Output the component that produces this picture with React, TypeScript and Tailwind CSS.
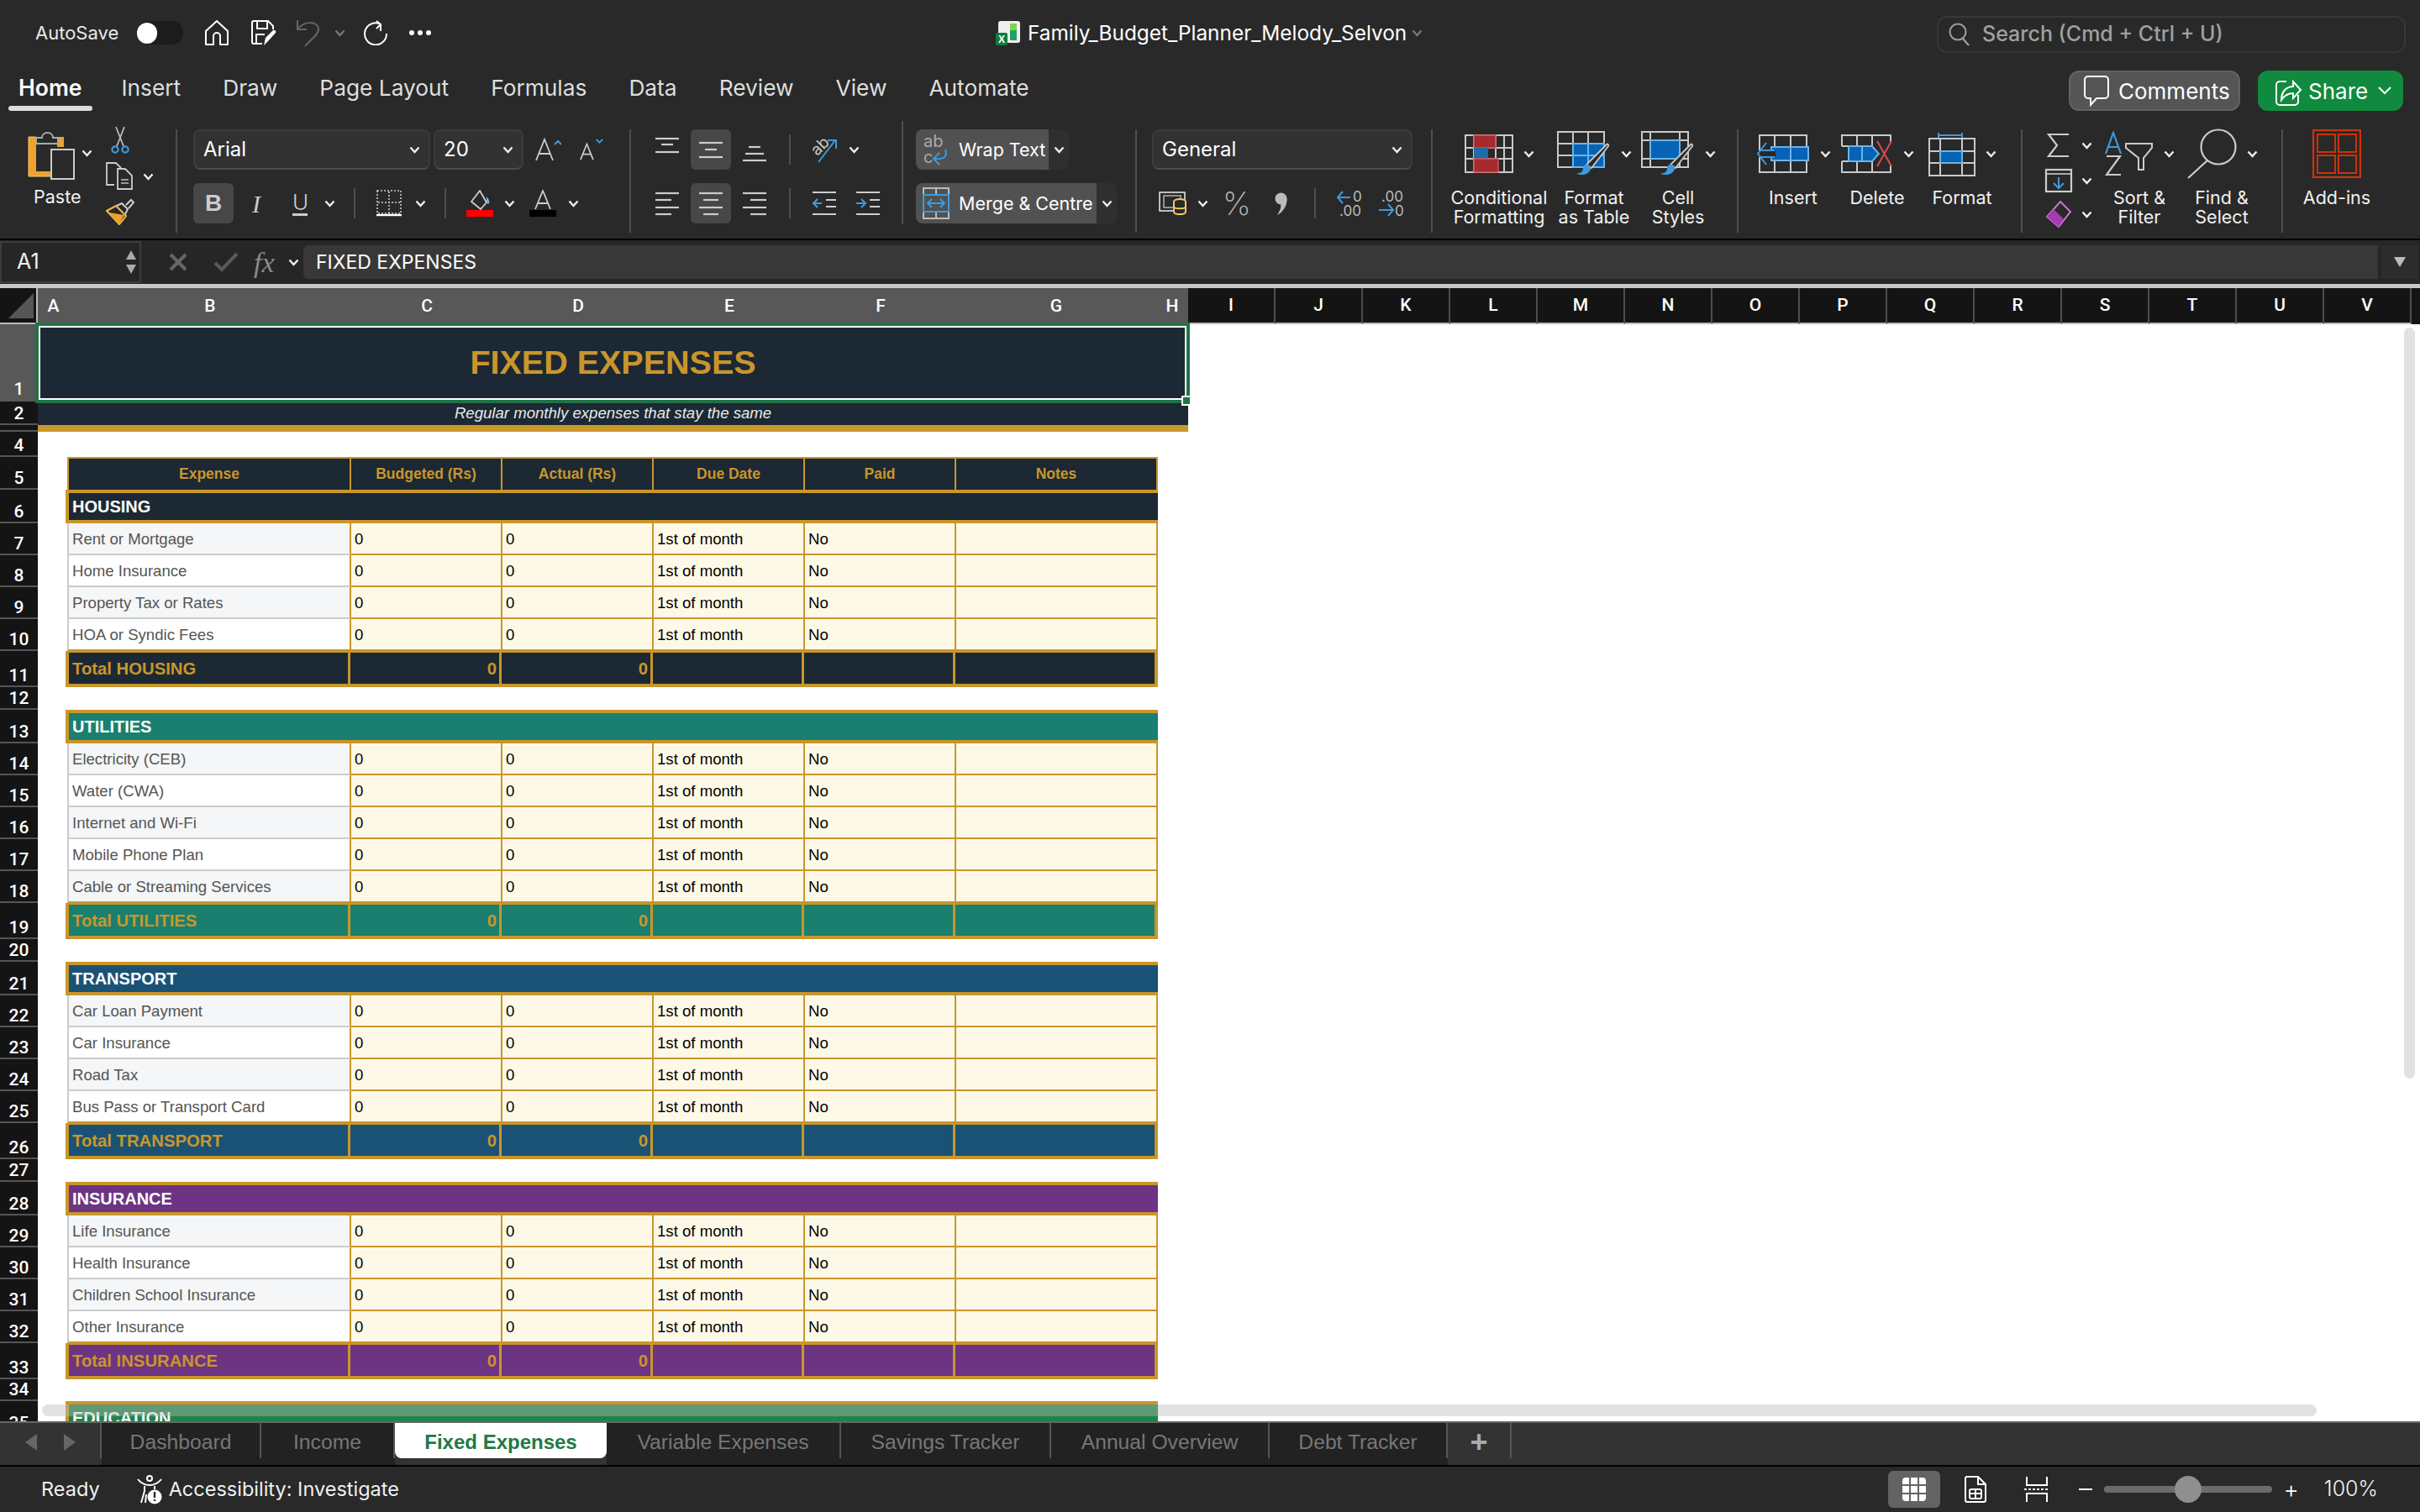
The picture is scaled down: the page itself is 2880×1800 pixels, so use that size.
import type { ReactNode } from "react";

const navy = "bg-[#1c2833]";

function Chev({ dim = false }: { dim?: boolean }) {
  return (
    <svg width="13" height="9" viewBox="0 0 13 9" className="shrink-0" fill="none">
      <path d="M1.5 1.5l5 5.5 5-5.5" stroke={dim ? "#777" : "#eee"} strokeWidth="2.4" />
    </svg>
  );
}

function Divider({ className = "h-[123px]" }: { className?: string }) {
  return <div className={`w-[2px] shrink-0 bg-[#4f4f4f] ${className}`}></div>;
}

// ----- title bar icons
function HomeIcon() {
  return (
    <svg width="30" height="32" viewBox="0 0 30 32" fill="none" stroke="#fff" strokeWidth="2">
      <path d="M2 14L15 2l13 12v16h-9V20a4 4 0 0 0-8 0v10H2z" strokeLinejoin="round" />
    </svg>
  );
}
function SaveIcon() {
  return (
    <svg width="32" height="32" viewBox="0 0 32 32" fill="none" stroke="#fff" strokeWidth="2">
      <path d="M14 29H4a2 2 0 0 1-2-2V4a2 2 0 0 1 2-2h17l6 6v4" />
      <path d="M8 2v9h12V2M7 29V18h10" />
      <path d="M16 31l2-9 9-9c2-1 4 1 3 3l-9 10z" fill="#fff" stroke="none" />
    </svg>
  );
}
function UndoIcon() {
  return (
    <svg width="28" height="34" viewBox="0 0 28 34" fill="none" stroke="#666" strokeWidth="2">
      <path d="M1 2v11h11M1 13C8 3 26 2 26 13c0 6-8 11-16 20" />
    </svg>
  );
}
function RedoIcon() {
  return (
    <svg width="30" height="30" viewBox="0 0 30 30" fill="none" stroke="#fff" strokeWidth="2">
      <path d="M19 4a13 13 0 1 0 9 12" />
      <path d="M16 1l5 4-5 5M21 5v8" />
    </svg>
  );
}
function ExcelIcon() {
  return (
    <svg width="30" height="30" viewBox="0 0 30 30" className="overflow-visible">
      <rect x="3" y="1" width="26" height="26" rx="3" fill="#eee" />
      <path d="M17 4h8v20h-8z" fill="#21a366" />
      <path d="M17 4h8v8h-8z" fill="#7dd34f" />
      <rect x="0" y="15" width="14" height="15" rx="2" fill="#107c41" />
      <text x="3" y="27" fontSize="12" fontWeight="700" fill="#fff" fontFamily="Liberation Sans">X</text>
    </svg>
  );
}

// ----- clipboard group
function PasteIcon() {
  return (
    <svg width="60" height="62" viewBox="0 0 60 62" fill="none">
      <path d="M2 9h9v41h17v6H2z" fill="#eca22c" />
      <path d="M36 9h8v12h-8z" fill="#eca22c" />
      <path d="M2 9h9M2 9v47h26" stroke="#f8c96e" strokeWidth="1" />
      <path d="M11 17v-7h7c0-8 13-8 13 0h6v7z" stroke="#aaa" strokeWidth="2" fill="#292929" />
      <rect x="29" y="24" width="27" height="35" stroke="#ccc" strokeWidth="2" fill="#292929" />
    </svg>
  );
}
function ScissorsIcon() {
  return (
    <svg width="22" height="34" viewBox="0 0 22 34" fill="none">
      <path d="M6 1l9 23M16 1L7 24" stroke="#bbb" strokeWidth="1.8" />
      <circle cx="5" cy="28" r="3.6" stroke="#3b9ae1" strokeWidth="2.2" />
      <circle cx="17" cy="28" r="3.6" stroke="#3b9ae1" strokeWidth="2.2" />
    </svg>
  );
}
function CopyIcon() {
  return (
    <svg width="32" height="34" viewBox="0 0 32 34" fill="none" stroke="#ccc" strokeWidth="1.8">
      <path d="M10 27H1V1h11l6 6" />
      <path d="M14 8h9l8 8v16H14z" fill="#292929" />
      <path d="M18 21h9M18 25h9" stroke="#999" />
    </svg>
  );
}
function PainterIcon() {
  return (
    <svg width="34" height="32" viewBox="0 0 34 32" fill="none">
      <path d="M1 15l11-6 12 12-8 10z" fill="#292929" stroke="#f1b849" strokeWidth="2" />
      <path d="M4 17l18 3-6 10z" fill="#eca22c" />
      <path d="M13 9l6-3 7 7-3 6M24 8l6-6 3 3-6 7" stroke="#ccc" strokeWidth="2" />
    </svg>
  );
}

// ----- font group
function Select({ label, className }: { label: string; className: string }) {
  return (
    <div className={`h-[48px] flex items-center justify-between pl-[10px] pr-[10px] rounded-[8px] bg-[#323232] border-2 border-[#3b3b3b] border-b-[#4c4c4c] text-[24px] text-white ${className}`}>
      <span>{label}</span>
      <Chev />
    </div>
  );
}
function GrowA({ up }: { up: boolean }) {
  return (
    <svg width={up ? 32 : 30} height="30" viewBox="0 0 32 30" fill="none">
      {up ? (
        <>
          <path d="M2 28L12 3l10 25M5.5 20h13" stroke="#ccc" strokeWidth="1.8" />
          <path d="M24 9l4-4 4 4" stroke="#3b9ae1" strokeWidth="2" />
        </>
      ) : (
        <>
          <path d="M2 28l8-20 8 20M5 21h10" stroke="#ccc" strokeWidth="1.8" />
          <path d="M22 2l4 4 4-4" stroke="#3b9ae1" strokeWidth="2" />
        </>
      )}
    </svg>
  );
}
function BordersIcon() {
  return (
    <svg width="30" height="32" viewBox="0 0 30 32" fill="none">
      <rect x="1" y="1" width="28" height="27" stroke="#ccc" strokeWidth="1.6" strokeDasharray="2 2" />
      <path d="M15 2v26M2 15h26" stroke="#ccc" strokeWidth="1.6" strokeDasharray="2 2" />
      <path d="M0 30h30" stroke="#fff" strokeWidth="2.4" />
    </svg>
  );
}
function FillIcon() {
  return (
    <svg width="32" height="32" viewBox="0 0 32 32" fill="none">
      <path d="M16 1l8 14-7 8-11-9z" stroke="#ccc" strokeWidth="1.8" />
      <path d="M24 8c3 3 4 6 3 8s-3 0-3-2z" fill="#6fb5ea" />
      <rect x="0" y="24" width="32" height="8" fill="#fe0000" />
    </svg>
  );
}
function FontColorIcon() {
  return (
    <svg width="32" height="32" viewBox="0 0 32 32" fill="none">
      <path d="M7 23L16 1l9 22M10 16h12" stroke="#ccc" strokeWidth="1.8" />
      <rect x="0" y="24" width="32" height="8" fill="#000" />
    </svg>
  );
}

// ----- alignment icons, three or four strokes
function Lines({ rows }: { rows: [number, number, number][] }) {
  return (
    <svg width="30" height="32" viewBox="0 0 30 32" fill="none" stroke="#ccc" strokeWidth="2.2">
      {rows.map(([y, x1, x2]) => (
        <path key={y + "-" + x1} d={`M${x1} ${y}H${x2}`} />
      ))}
    </svg>
  );
}
function AlignBtn({ rows, on = false }: { rows: [number, number, number][]; on?: boolean }) {
  return (
    <div className={`w-[48px] h-[48px] flex items-center justify-center rounded-[6px] ${on ? "bg-[#474747]" : ""}`}>
      <Lines rows={rows} />
    </div>
  );
}
function OrientIcon() {
  return (
    <svg width="36" height="34" viewBox="0 0 36 34" fill="none" className="overflow-visible">
      <text x="3" y="20" fontSize="19" fill="#ccc" fontFamily="Inter" transform="rotate(-45 12 16)">ab</text>
      <path d="M10 32L30 6M21 6h10v10" stroke="#3b9ae1" strokeWidth="2" />
    </svg>
  );
}
function IndentIcon({ out }: { out: boolean }) {
  return (
    <svg width="30" height="32" viewBox="0 0 30 32" fill="none">
      <path d="M1 3h28M1 29h28" stroke="#ccc" strokeWidth="2.2" />
      <path d="M17 12h12M17 20h12" stroke="#ccc" strokeWidth="2.2" />
      {out ? <path d="M12 16H2M7 11l-5 5 5 5" stroke="#3b9ae1" strokeWidth="2.2" /> : <path d="M1 16h11M7 11l5 5-5 5" stroke="#3b9ae1" strokeWidth="2.2" />}
    </svg>
  );
}

// ----- wrap and merge
function WrapIcon() {
  return (
    <svg width="32" height="38" viewBox="0 0 32 38" fill="none" className="overflow-visible">
      <text x="1" y="16" fontSize="20" fill="#aaa" fontFamily="Inter">ab</text>
      <text x="1" y="35" fontSize="20" fill="#aaa" fontFamily="Inter">c</text>
      <path d="M27 19c3 9-2 12-14 11M20 23l-7 7 7 7" stroke="#3b9ae1" strokeWidth="2" />
    </svg>
  );
}
function MergeIcon() {
  return (
    <svg width="32" height="38" viewBox="0 0 32 38" fill="none">
      <path d="M1 8V1h30v7M1 30v7h30v-7M16 1v7M16 30v7" stroke="#bbb" strokeWidth="2" />
      <rect x="1" y="9" width="30" height="20" stroke="#3b9ae1" strokeWidth="2" />
      <path d="M6 19h20M11 14l-5 5 5 5M21 14l5 5-5 5" stroke="#3b9ae1" strokeWidth="2" />
    </svg>
  );
}
function SplitBtn({ icon, label, main, chev }: { icon: ReactNode; label: string; main: string; chev: string }) {
  return (
    <div className="flex h-[48px]">
      <div className={`flex items-center pl-[8px] rounded-l-[8px] bg-[#515151] text-white text-[21.5px] ${main}`}>
        {icon}
        <span className="ml-[11px] whitespace-nowrap">{label}</span>
      </div>
      <div className={`flex items-center justify-center rounded-r-[8px] bg-[#2f2f2f] ${chev}`}>
        <Chev />
      </div>
    </div>
  );
}

// ----- number group
function AccountingIcon() {
  return (
    <svg width="34" height="28" viewBox="0 0 34 28" fill="none">
      <rect x="1" y="1" width="30" height="22" stroke="#ccc" strokeWidth="1.8" />
      <rect x="6" y="5" width="20" height="14" stroke="#bbb" strokeWidth="1.4" />
      <ellipse cx="25" cy="12" rx="7" ry="3" fill="#292929" stroke="#f1c96a" strokeWidth="2" />
      <path d="M18 12v12c0 4 14 4 14 0V12" fill="#292929" stroke="#f1c96a" strokeWidth="2" />
      <path d="M18 18c0 3 14 3 14 0" stroke="#f1c96a" strokeWidth="2" />
    </svg>
  );
}
function CommaIcon() {
  return (
    <svg width="15" height="27" viewBox="0 0 15 27" fill="#bbb">
      <circle cx="7.5" cy="7.5" r="7" />
      <path d="M14.5 7.5C15 17 9 24 3 27c3-5 5-9 4-12z" />
    </svg>
  );
}
function DecimalIcon({ more }: { more: boolean }) {
  return (
    <svg width="34" height="32" viewBox="0 0 34 32" fill="none" className="overflow-visible">
      {more ? (
        <>
          <path d="M17 9H2M8 2L2 9l6 7" stroke="#3b9ae1" strokeWidth="2" />
          <text x="20" y="14" fontSize="17" fill="#bbb" fontFamily="Inter">0</text>
          <text x="4" y="31" fontSize="17" fill="#bbb" fontFamily="Inter">.00</text>
        </>
      ) : (
        <>
          <text x="4" y="14" fontSize="17" fill="#bbb" fontFamily="Inter">.00</text>
          <path d="M1 24h17M12 17l6 7-6 7" stroke="#3b9ae1" strokeWidth="2" />
          <text x="20" y="31" fontSize="17" fill="#bbb" fontFamily="Inter">0</text>
        </>
      )}
    </svg>
  );
}

// ----- cell and style icons
const gridLines = "#c9c9c9";
function CondIcon() {
  return (
    <svg width="58" height="46" viewBox="0 0 58 46" fill="none">
      <rect x="1" y="1" width="56" height="44" stroke={gridLines} strokeWidth="2" />
      <path d="M11 1v44M37 1v44M47 1v44M1 16h56M1 29h56" stroke={gridLines} strokeWidth="2" />
      <rect x="11" y="1" width="26" height="15" fill="#a52b2f" stroke="#d15a5a" strokeWidth="1.5" />
      <rect x="11" y="16" width="17" height="13" fill="#1f6ba8" />
      <rect x="11" y="29" width="29" height="16" fill="#a52b2f" stroke="#d15a5a" strokeWidth="1.5" />
    </svg>
  );
}
function Brush() {
  return (
    <>
      <path d="M59 16c1-1 3 0 2 2L41 44l-6-4z" fill="#292929" stroke="#c9c9c9" strokeWidth="1.8" />
      <path d="M34 40c3-1 5 1 6 4 0 5-6 9-12 8-2 0-4-1-5-2 5 1 8-2 8-6 0-2 1-3 3-4z" fill="#3b9ae1" />
    </>
  );
}
function TableIcon() {
  return (
    <svg width="64" height="54" viewBox="0 0 64 54" fill="none">
      <rect x="1" y="1" width="55" height="42" stroke={gridLines} strokeWidth="2" />
      <path d="M19 1v42M37 1v42M1 15h55M1 29h55" stroke={gridLines} strokeWidth="2" />
      <rect x="19" y="15" width="37" height="28" fill="#0763b5" stroke="#6bb3ec" strokeWidth="2" />
      <path d="M37 15v28M19 29h37" stroke="#6bb3ec" strokeWidth="2" />
      <Brush />
    </svg>
  );
}
function StylesIcon() {
  return (
    <svg width="64" height="54" viewBox="0 0 64 54" fill="none">
      <rect x="1" y="1" width="55" height="42" stroke={gridLines} strokeWidth="2" />
      <path d="M11 1v42M46 1v42M1 11h55M1 33h55" stroke={gridLines} strokeWidth="2" />
      <rect x="11" y="11" width="35" height="22" fill="#0763b5" stroke="#6bb3ec" strokeWidth="2" />
      <Brush />
    </svg>
  );
}
function InsertIcon() {
  return (
    <svg width="64" height="46" viewBox="0 0 64 46" fill="none">
      <rect x="4" y="1" width="56" height="44" stroke={gridLines} strokeWidth="2" />
      <path d="M22 1v44M41 1v44" stroke={gridLines} strokeWidth="2" />
      <rect x="18" y="15" width="44" height="16" fill="#0763b5" stroke="#6bb3ec" strokeWidth="2" />
      <path d="M41 15v16" stroke="#6bb3ec" strokeWidth="2" />
      <rect x="3" y="19" width="20" height="8" fill="#292929" />
      <path d="M22 19H5M22 27H5M12 10L2 23l10 13" stroke="#3b9ae1" strokeWidth="2" />
    </svg>
  );
}
function DeleteIcon() {
  return (
    <svg width="62" height="46" viewBox="0 0 62 46" fill="none">
      <path d="M41 1H1v13M1 32v13h40M59 10V1H41M59 36v9H41M19 1v13M19 32v13M37 1v13M37 32v13" stroke={gridLines} strokeWidth="2" />
      <path d="M1 14h14M1 32h14" stroke={gridLines} strokeWidth="2" />
      <path d="M9 14h28l8 9-8 9H9z" fill="#0763b5" stroke="#6bb3ec" strokeWidth="2" />
      <path d="M25 14v18" stroke="#6bb3ec" strokeWidth="2" />
      <path d="M43 8l17 30M60 8L43 38" stroke="#e0484c" strokeWidth="2" />
    </svg>
  );
}
function FormatIcon() {
  return (
    <svg width="56" height="54" viewBox="0 0 56 54" fill="none">
      <path d="M12 2v6M40 2v6M12 5h28" stroke="#3b9ae1" strokeWidth="2" />
      <rect x="1" y="9" width="54" height="44" stroke={gridLines} strokeWidth="2" />
      <path d="M14 9v44M40 9v44M1 24h54M1 38h54" stroke={gridLines} strokeWidth="2" />
      <rect x="14" y="24" width="26" height="14" fill="#0763b5" stroke="#6bb3ec" strokeWidth="2" />
    </svg>
  );
}
function SortIcon() {
  return (
    <svg width="58" height="54" viewBox="0 0 58 54" fill="none">
      <path d="M1 27L10 2l9 25M4 19h12" stroke="#3b9ae1" strokeWidth="2.2" />
      <path d="M2 30h16L2 52h17" stroke="#ccc" strokeWidth="2.2" />
      <path d="M25 15h31v5L46 32v14h-6V32L25 20z" stroke="#ccc" strokeWidth="2" />
    </svg>
  );
}
function FindIcon() {
  return (
    <svg width="60" height="60" viewBox="0 0 60 60" fill="none" stroke="#ccc" strokeWidth="2.2">
      <circle cx="38" cy="22" r="20.5" />
      <path d="M25 38L2 59" />
    </svg>
  );
}
function AddinsIcon() {
  return (
    <svg width="58" height="58" viewBox="0 0 58 58" fill="none" stroke="#c9340c" strokeWidth="2">
      <rect x="1" y="1" width="56" height="56" strokeWidth="2.4" />
      <rect x="6" y="6" width="21" height="21" />
      <rect x="31" y="6" width="21" height="21" />
      <rect x="6" y="31" width="21" height="21" />
      <rect x="31" y="31" width="21" height="21" />
    </svg>
  );
}
function BigBtn({ icon, label, width, chev = true }: { icon: ReactNode; label: ReactNode; width: string; chev?: boolean }) {
  return (
    <div className={`flex flex-col items-center shrink-0 ${width}`}>
      <div className="h-[58px] mb-[12px] flex items-center gap-[12px]">
        {icon}
        {chev && <Chev />}
      </div>
      <div className="text-[21.5px] leading-[23px] text-center text-[#f0f0f0]">{label}</div>
    </div>
  );
}

function TitleBar() {
  return (
    <div className="h-[78px] flex items-center shrink-0">
      <span className="ml-[42px] w-[99px] text-[22px] text-[#e8e8e8]">AutoSave</span>
      <div className="ml-[22px] w-[55px] h-[28px] rounded-full bg-[#1c1c1c] flex items-center">
        <div className="w-[24px] h-[25px] rounded-full bg-white"></div>
      </div>
      <div className="ml-[25px]"><HomeIcon /></div>
      <div className="ml-[25px]"><SaveIcon /></div>
      <div className="ml-[23px]"><UndoIcon /></div>
      <div className="ml-[17px]"><Chev dim /></div>
      <div className="ml-[21px]"><RedoIcon /></div>
      <div className="ml-[25px] flex gap-[4px]">
        <div className="w-[6px] h-[6px] rounded-full bg-white"></div>
        <div className="w-[6px] h-[6px] rounded-full bg-white"></div>
        <div className="w-[6px] h-[6px] rounded-full bg-white"></div>
      </div>
      <div className="ml-[672px]"><ExcelIcon /></div>
      <span className="ml-[8px] text-[24.4px] text-white">Family_Budget_Planner_Melody_Selvon</span>
      <div className="ml-[6px]"><Chev dim /></div>
      <div className="ml-auto mr-[17px] mt-[3px] w-[558px] h-[44px] rounded-[12px] border-2 border-[#373737] flex items-center pl-[12px]">
        <svg width="26" height="30" viewBox="0 0 26 30" fill="none" stroke="#a0a0a0" strokeWidth="2">
          <circle cx="11" cy="12" r="9.5" />
          <path d="M17 20l7 8" />
        </svg>
        <span className="ml-[14px] text-[25px] font-medium text-[#a0a0a0]">Search (Cmd + Ctrl + U)</span>
      </div>
    </div>
  );
}

function TabBar() {
  const tabs = ["Insert", "Draw", "Page Layout", "Formulas", "Data", "Review", "View", "Automate"];
  return (
    <div className="h-[54px] flex items-start shrink-0 pl-[22px]">
      <div className="relative h-[54px] flex items-center text-[26.5px] font-semibold text-white">
        Home
        <div className="absolute left-[-12px] right-[-13px] bottom-0 h-[6px] rounded-full bg-[#dcdcdc]"></div>
      </div>
      <div className="ml-[47px] h-[54px] flex items-center gap-[50px] text-[26.3px] text-[#dedede]">
        {tabs.map((t) => (
          <span key={t}>{t}</span>
        ))}
      </div>
      <div className="ml-auto mt-[6px] h-[48px] w-[204px] rounded-[12px] bg-[#555] border-2 border-[#636363] flex items-center pl-[15px] gap-[10px] text-[26px] text-white">
        <svg width="32" height="38" viewBox="0 0 32 38" fill="none" stroke="#fff" strokeWidth="2">
          <path d="M6 2h20a4 4 0 0 1 4 4v18a4 4 0 0 1-4 4H16l-7 8v-8H6a4 4 0 0 1-4-4V6a4 4 0 0 1 4-4z" />
        </svg>
        Comments
      </div>
      <div className="ml-[21px] mr-[20px] mt-[6px] h-[48px] w-[173px] rounded-[12px] bg-[#108a3e] flex items-center pl-[20px] gap-[8px] text-[26px] text-white">
        <svg width="32" height="38" viewBox="0 0 32 38" fill="none" stroke="#fff" strokeWidth="2">
          <path d="M14 8H6a4 4 0 0 0-4 4v20a4 4 0 0 0 4 4h18a4 4 0 0 0 4-4v-8" />
          <path d="M8 30c0-10 6-16 14-16V8l9 10-9 10v-6c-6 0-10 2-14 8z" />
        </svg>
        Share
        <svg width="16" height="10" viewBox="0 0 16 10" fill="none" className="ml-[4px]">
          <path d="M1 1l7 7 7-7" stroke="#fff" strokeWidth="2" />
        </svg>
      </div>
    </div>
  );
}

function Ribbon() {
  return (
    <div className="h-[154px] pt-[22px] flex items-start shrink-0 border-b-2 border-black text-white">
      {/* clipboard */}
      <div className="w-[209px] shrink-0 flex">
        <div className="ml-[32px] w-[60px] flex flex-col items-start">
          <PasteIcon />
          <span className="mt-[7px] ml-[8px] text-[21.5px] leading-[23px] text-[#f0f0f0]">Paste</span>
        </div>
        <div className="ml-[5px] mt-[24px]"><Chev /></div>
        <div className="ml-[16px] -mt-[4px] flex flex-col gap-[9px]">
          <div className="ml-[6px]"><ScissorsIcon /></div>
          <div className="flex items-center gap-[12px]"><CopyIcon /><Chev /></div>
          <div><PainterIcon /></div>
        </div>
      </div>
      <Divider />

      {/* font */}
      <div className="w-[538px] shrink-0 pl-[19px] flex flex-col gap-[16px]">
        <div className="flex items-center">
          <Select label="Arial" className="w-[282px]" />
          <Select label="20" className="ml-[4px] w-[107px]" />
          <div className="ml-[13px]"><GrowA up /></div>
          <div className="ml-[21px]"><GrowA up={false} /></div>
        </div>
        <div className="flex items-center">
          <div className="w-[48px] h-[48px] rounded-[6px] bg-[#474747] flex items-center justify-center font-['Liberation_Sans',sans-serif] font-bold text-[28px] text-[#ccc]">B</div>
          <span className="ml-[22px] w-[16px] font-['Liberation_Serif',serif] italic text-[30px] text-[#ccc]">I</span>
          <div className="ml-[32px] w-[18px] border-b-[3px] border-[#ccc] leading-[26px] text-[#ccc] text-[26px] font-light">U</div>
          <div className="ml-[20px]"><Chev /></div>
          <div className="ml-[22px]"><Divider className="h-[36px]" /></div>
          <div className="ml-[25px]"><BordersIcon /></div>
          <div className="ml-[16px]"><Chev /></div>
          <div className="ml-[22px]"><Divider className="h-[36px]" /></div>
          <div className="ml-[24px]"><FillIcon /></div>
          <div className="ml-[13px]"><Chev /></div>
          <div className="ml-[17px]"><FontColorIcon /></div>
          <div className="ml-[14px]"><Chev /></div>
        </div>
      </div>
      <Divider />

      {/* alignment */}
      <div className="w-[322px] shrink-0 flex flex-col gap-[16px] pl-[19px]">
        <div className="flex items-center">
          <AlignBtn rows={[[3, 1, 29], [10, 8, 22], [19, 1, 29]]} />
          <div className="ml-[4px]"><AlignBtn on rows={[[8, 1, 29], [16, 8, 22], [25, 1, 29]]} /></div>
          <div className="ml-[4px]"><AlignBtn rows={[[13, 8, 22], [21, 4, 26], [29, 1, 29]]} /></div>
          <div className="ml-[17px]"><Divider className="h-[36px]" /></div>
          <div className="ml-[23px]"><OrientIcon /></div>
          <div className="ml-[10px]"><Chev /></div>
        </div>
        <div className="flex items-center">
          <AlignBtn rows={[[4, 1, 29], [12, 1, 20], [21, 1, 29], [29, 1, 20]]} />
          <div className="ml-[4px]"><AlignBtn on rows={[[4, 1, 29], [12, 6, 24], [21, 1, 29], [29, 6, 24]]} /></div>
          <div className="ml-[4px]"><AlignBtn rows={[[4, 1, 29], [12, 10, 29], [21, 1, 29], [29, 10, 29]]} /></div>
          <div className="ml-[17px]"><Divider className="h-[36px]" /></div>
          <div className="ml-[25px]"><IndentIcon out /></div>
          <div className="ml-[22px]"><IndentIcon out={false} /></div>
        </div>
      </div>
      <div className="-mt-[10px]"><Divider /></div>

      {/* wrap and merge */}
      <div className="w-[276px] shrink-0 pl-[15px] flex flex-col gap-[16px]">
        <SplitBtn icon={<WrapIcon />} label="Wrap Text" main="w-[158px]" chev="w-[24px]" />
        <SplitBtn icon={<MergeIcon />} label="Merge & Centre" main="w-[215px]" chev="w-[24px]" />
      </div>
      <Divider />

      {/* number */}
      <div className="w-[350px] shrink-0 pl-[18px] flex flex-col gap-[16px]">
        <Select label="General" className="w-[310px]" />
        <div className="flex items-center h-[48px]">
          <div className="ml-[8px]"><AccountingIcon /></div>
          <div className="ml-[12px]"><Chev /></div>
          <span className="ml-[17px] w-[34px] text-[38px] leading-none font-extralight text-[#bbb]">%</span>
          <div className="ml-[28px]"><CommaIcon /></div>
          <div className="ml-[32px]"><Divider className="h-[36px]" /></div>
          <div className="ml-[24px]"><DecimalIcon more /></div>
          <div className="ml-[16px]"><DecimalIcon more={false} /></div>
        </div>
      </div>
      <Divider />

      {/* styles */}
      <div className="w-[362px] shrink-0 pl-[23px] flex">
        <BigBtn width="w-[112px]" icon={<CondIcon />} label={<>Conditional<br />Formatting</>} />
        <BigBtn width="w-[114px]" icon={<TableIcon />} label={<>Format<br />as Table</>} />
        <BigBtn width="w-[86px]" icon={<StylesIcon />} label={<>Cell<br />Styles</>} />
      </div>
      <Divider />

      {/* cells */}
      <div className="w-[336px] shrink-0 pl-[15px] flex">
        <BigBtn width="w-[100px]" icon={<InsertIcon />} label="Insert" />
        <BigBtn width="w-[100px]" icon={<DeleteIcon />} label="Delete" />
        <BigBtn width="w-[102px]" icon={<FormatIcon />} label="Format" />
      </div>
      <Divider />

      {/* editing */}
      <div className="w-[308px] shrink-0 pl-[25px] flex">
        <div className="w-[60px] shrink-0 flex flex-col -mt-[2px]">
          <div className="h-[42px] flex items-center gap-[9px]">
            <svg width="36" height="30" viewBox="0 0 36 30" fill="none">
              <path d="M30 2H6l10 13L6 28h24" stroke="#ccc" strokeWidth="2.2" />
            </svg>
            <Chev />
          </div>
          <div className="h-[42px] flex items-center gap-[9px]">
            <svg width="36" height="30" viewBox="0 0 36 30" fill="none">
              <rect x="3" y="2" width="30" height="26" stroke="#ccc" strokeWidth="2.2" />
              <path d="M3 7h30" stroke="#ccc" strokeWidth="1.6" />
              <path d="M18 11v13M12 18l6 6 6-6" stroke="#3b9ae1" strokeWidth="2" />
            </svg>
            <Chev />
          </div>
          <div className="h-[38px] flex items-center gap-[9px]">
            <svg width="36" height="32" viewBox="0 0 36 32" fill="none">
              <path d="M20 1l12 12-14 18L4 19z" stroke="#c879d1" strokeWidth="2" />
              <path d="M4 19l8-9 12 12-6 9z" fill="#a53bb0" />
            </svg>
            <Chev />
          </div>
        </div>
        <BigBtn width="w-[108px]" icon={<SortIcon />} label={<>Sort &<br />Filter</>} />
        <BigBtn width="w-[88px]" icon={<FindIcon />} label={<>Find &<br />Select</>} />
      </div>
      <Divider />

      {/* add-ins */}
      <BigBtn width="w-[128px]" icon={<AddinsIcon />} chev={false} label="Add-ins" />
    </div>
  );
}

function FormulaBar() {
  return (
    <div className="h-[52px] flex items-center shrink-0 bg-[#262626]">
      <div className="w-[168px] h-[50px] shrink-0 border-2 border-[#3c3c3c] flex items-center justify-between pl-[18px] pr-[4px] text-[25px] text-[#f0f0f0]">
        A1
        <div className="flex flex-col gap-[6px]">
          <div className="w-0 h-0 border-x-[6px] border-x-transparent border-b-[11px] border-b-[#aaa]"></div>
          <div className="w-0 h-0 border-x-[6px] border-x-transparent border-t-[11px] border-t-[#aaa]"></div>
        </div>
      </div>
      <svg width="22" height="22" viewBox="0 0 22 22" className="ml-[33px]" fill="none">
        <path d="M2 2l18 18M20 2L2 20" stroke="#666" strokeWidth="4" />
      </svg>
      <svg width="30" height="24" viewBox="0 0 30 24" className="ml-[31px]" fill="none">
        <path d="M2 13l8 8L28 2" stroke="#5a5a5a" strokeWidth="4" />
      </svg>
      <span className="ml-[18px] w-[39px] font-['Liberation_Serif',serif] italic text-[34px] text-[#8a8a8a]">fx</span>
      <div className="ml-[2px]"><Chev /></div>
      <div className="ml-[5px] h-[40px] w-[2469px] rounded-l-[6px] bg-[#383838] flex items-center pl-[15px] text-[23px] text-white">FIXED EXPENSES</div>
      <div className="ml-[4px] h-[40px] w-[44px] bg-[#2c2c2c] flex items-center justify-center">
        <div className="w-0 h-0 border-x-[7px] border-x-transparent border-t-[12px] border-t-[#bbb]"></div>
      </div>
    </div>
  );
}

// ----- sheet
const colsOn = [
  ["A", "w-[37px]"],
  ["B", "w-[336px]"],
  ["C", "w-[180px]"],
  ["D", "w-[180px]"],
  ["E", "w-[180px]"],
  ["F", "w-[180px]"],
  ["G", "w-[238px]"],
  ["H", "w-[38px]"],
];
const colsOff = ["I", "J", "K", "L", "M", "N", "O", "P", "Q", "R", "S", "T", "U", "V"];

function ColumnHeader() {
  return (
    <div className="h-[43px] flex shrink-0 bg-[#141414] font-[Roboto,sans-serif] font-medium text-[21px] text-white">
      <div className="w-[45px] shrink-0 border-b-2 border-r-2 border-[#bbb] flex items-end justify-end pb-[5px] pr-[3px]">
        <div className="w-0 h-0 border-l-[30px] border-l-transparent border-b-[30px] border-b-[#555]"></div>
      </div>
      {colsOn.map(([c, w]) => (
        <div key={c} className={`${w} shrink-0 bg-[#585858] flex items-center justify-center`}>{c}</div>
      ))}
      {colsOff.map((c) => (
        <div key={c} className="w-[104px] shrink-0 border-r-2 border-b-2 border-r-[#4d4d4d] border-b-[#bbb] flex items-center justify-center">{c}</div>
      ))}
    </div>
  );
}

function RowHead({ n, on = false }: { n?: number; on?: boolean }) {
  return (
    <div className={`w-[45px] shrink-0 flex items-end justify-center font-[Roboto,sans-serif] font-medium text-[21px] leading-[24px] text-white ${on ? "bg-[#585858] pb-[3px]" : "bg-[#141414] border-b-2 border-[#555]"}`}>
      {n}
    </div>
  );
}

function Row({ n, h, children, on = false }: { n?: number; h: string; children?: ReactNode; on?: boolean }) {
  return (
    <div className={`flex shrink-0 ${h}`}>
      <RowHead n={n} on={on} />
      <div className="flex-1 min-w-0">{children}</div>
    </div>
  );
}

const valueCols = ["w-[180px]", "w-[180px]", "w-[180px]", "w-[180px]", "w-[240px]"];
const arial = "font-['Liberation_Sans',Arial,sans-serif]";

function HeaderCells() {
  const labels = ["Budgeted (Rs)", "Actual (Rs)", "Due Date", "Paid", "Notes"];
  return (
    <div className={`ml-[35px] h-full flex ${navy} w-[1298px] border-t-2 border-[#c9962b] text-[17.5px] font-bold text-[#c9962b] ${arial}`}>
      <div className="w-[338px] border-x-2 border-[#c9962b] flex items-center justify-center">Expense</div>
      {labels.map((l, i) => (
        <div key={l} className={`${valueCols[i]} border-r-2 border-[#c9962b] flex items-center justify-center`}>{l}</div>
      ))}
    </div>
  );
}

function SectionCell({ name, color }: { name: string; color: string }) {
  return (
    <div className={`ml-[33px] w-[1300px] h-full flex items-center pl-[4px] border-y-4 border-l-4 border-[#c9962b] text-[20px] font-bold text-white ${color} ${arial}`}>
      {name}
    </div>
  );
}

function DataCells({ label, alt, last }: { label: string; alt: boolean; last: boolean }) {
  const cell = "h-full border-r-2 border-b-2 border-[#c9962b] bg-[#fef9e7] flex items-center pl-[4px] pt-[1px] text-black";
  return (
    <div className={`ml-[35px] h-full flex w-[1298px] text-[18.6px] ${arial}`}>
      <div className={`w-[338px] h-full border-l-2 border-l-[#ccc] border-r-2 border-r-[#c9962b] border-b-2 ${last ? "border-b-[#c9962b]" : "border-b-[#ccc]"} ${alt ? "bg-[#f4f6f7]" : "bg-white"} flex items-center pl-[4px] pt-[1px] text-[#555]`}>
        {label}
      </div>
      <div className={`w-[180px] ${cell}`}>0</div>
      <div className={`w-[180px] ${cell}`}>0</div>
      <div className={`w-[180px] ${cell}`}>1st of month</div>
      <div className={`w-[180px] ${cell}`}>No</div>
      <div className={`w-[240px] ${cell}`}></div>
    </div>
  );
}

function TotalCells({ name, color }: { name: string; color: string }) {
  const cell = "h-full border-r-[3px] border-[#c9962b] flex items-center justify-end pr-[3px] pt-[2px]";
  return (
    <div className={`ml-[33px] h-full w-[1300px] flex border-t-2 border-b-4 border-l-4 border-r-4 border-[#c9962b] text-[20.3px] font-bold text-[#c9962b] ${color} ${arial}`}>
      <div className="w-[335px] h-full border-r-[3px] border-[#c9962b] flex items-center pl-[4px] pt-[2px]">Total {name}</div>
      <div className={`w-[180px] ${cell}`}>0</div>
      <div className={`w-[180px] ${cell}`}>0</div>
      <div className={`w-[180px] ${cell}`}></div>
      <div className={`w-[180px] ${cell}`}></div>
      <div className="flex-1"></div>
    </div>
  );
}

const sections = [
  { name: "HOUSING", color: "bg-[#1c2833]", items: ["Rent or Mortgage", "Home Insurance", "Property Tax or Rates", "HOA or Syndic Fees"] },
  { name: "UTILITIES", color: "bg-[#1a7f6e]", items: ["Electricity (CEB)", "Water (CWA)", "Internet and Wi-Fi", "Mobile Phone Plan", "Cable or Streaming Services"] },
  { name: "TRANSPORT", color: "bg-[#1a5276]", items: ["Car Loan Payment", "Car Insurance", "Road Tax", "Bus Pass or Transport Card"] },
  { name: "INSURANCE", color: "bg-[#6c3483]", items: ["Life Insurance", "Health Insurance", "Children School Insurance", "Other Insurance"] },
];

function Sheet() {
  let n = 5;
  const rows: ReactNode[] = [];
  sections.forEach((s) => {
    n += 1;
    rows.push(
      <Row key={n} n={n} h="h-[40px]">
        <SectionCell name={s.name} color={s.color} />
      </Row>
    );
    s.items.forEach((item, i) => {
      n += 1;
      rows.push(
        <Row key={n} n={n} h="h-[38px]">
          <DataCells label={item} alt={i % 2 === 0} last={i === s.items.length - 1} />
        </Row>
      );
    });
    n += 1;
    rows.push(
      <Row key={n} n={n} h="h-[43px]">
        <TotalCells name={s.name} color={s.color} />
      </Row>
    );
    n += 1;
    rows.push(<Row key={n} n={n} h={n === 34 ? "h-[26px]" : "h-[27px]"} />);
  });

  return (
    <div className="relative flex-1 min-h-0 overflow-hidden bg-white flex flex-col">
      <ColumnHeader />
      <Row n={1} h="h-[92px]" on>
        <div className={`w-[1369px] h-full ${navy} flex items-center justify-center text-[39.5px] font-bold text-[#c9962b] ${arial}`}>FIXED EXPENSES</div>
      </Row>
      <Row n={2} h="h-[28px]">
        <div className={`w-[1369px] h-full ${navy} flex items-center justify-center italic text-[18.6px] text-[#e8e8e8] ${arial}`}>Regular monthly expenses that stay the same</div>
      </Row>
      <Row h="h-[8px]">
        <div className="w-[1369px] h-full bg-[#c9962b]"></div>
      </Row>
      <Row n={4} h="h-[30px]" />
      <Row n={5} h="h-[39px]">
        <HeaderCells />
      </Row>
      {rows}
      <Row n={35} h="h-[40px]">
        <SectionCell name="EDUCATION" color="bg-[#1e8449]" />
      </Row>

      {/* selection outline on A1 */}
      <div className="absolute left-[42px] top-[41px] w-[1374px] h-[96px] border-[4px] border-[#217346]">
        <div className="w-full h-full border-[2px] border-white"></div>
        <div className="absolute right-[-6px] bottom-[-7px] w-[12px] h-[12px] bg-[#217346] border-[2px] border-white"></div>
      </div>

      {/* overlay scrollbars */}
      <div className="absolute right-[6px] top-[47px] w-[13px] h-[894px] rounded-full bg-[#bababa6b]"></div>
      <div className="absolute left-[50px] bottom-[6px] w-[2707px] h-[14px] rounded-full bg-[#bababa6b]"></div>
    </div>
  );
}

function SheetTabs() {
  const tab = "h-[42px] pt-[4px] flex items-center justify-center border-r-2 border-[#555] mb-auto";
  return (
    <div className={`h-[54px] shrink-0 flex border-t-2 border-b-2 border-t-[#666] border-b-black bg-[#333] text-[24.7px] text-[#777] ${arial}`}>
      <div className={`w-[121px] ${tab} gap-[32px]`}>
        <div className="w-0 h-0 border-y-[10px] border-y-transparent border-r-[14px] border-r-[#666]"></div>
        <div className="w-0 h-0 border-y-[10px] border-y-transparent border-l-[14px] border-l-[#666]"></div>
      </div>
      <div className="flex bg-[#222]">
        <div className={`w-[190px] ${tab}`}>Dashboard</div>
        <div className={`w-[159px] ${tab}`}>Income</div>
        <div className="w-[252px] bg-[#333]">
          <div className="h-[42px] pt-[4px] rounded-b-[8px] bg-white flex items-center justify-center font-bold text-[24px] text-[#1e7a45]">Fixed Expenses</div>
        </div>
        <div className={`w-[279px] ${tab}`}>Variable Expenses</div>
        <div className={`w-[250px] ${tab}`}>Savings Tracker</div>
        <div className={`w-[260px] ${tab}`}>Annual Overview</div>
        <div className={`w-[212px] ${tab}`}>Debt Tracker</div>
      </div>
      <div className={`w-[76px] ${tab} text-[36px] font-bold text-[#aaa]`}>+</div>
    </div>
  );
}

function StatusBar() {
  return (
    <div className="h-[54px] shrink-0 flex items-center text-[23.5px] text-[#f0f0f0]">
      <span className="ml-[49px]">Ready</span>
      <svg width="32" height="36" viewBox="0 0 32 36" className="ml-[43px]" fill="none" stroke="#fff" strokeWidth="2">
        <circle cx="16" cy="5" r="3" />
        <path d="M2 6c4 5 8 7 14 7s10-2 14-7M10 14v6l-4 14M22 14v4M12 24l-1 10" />
        <circle cx="22" cy="27" r="8.5" fill="#fff" stroke="none" />
        <path d="M22 21v7M22 30v2" stroke="#292929" strokeWidth="2.4" />
      </svg>
      <span className="ml-[7px]">Accessibility: Investigate</span>
      <div className="ml-auto w-[62px] h-[44px] rounded-[6px] bg-[#636363] flex items-center justify-center">
        <svg width="28" height="28" viewBox="0 0 28 28" fill="#fff">
          <path d="M4 0h4v8H0V4a4 4 0 0 1 4-4zM10 0h8v8h-8zM20 0h4a4 4 0 0 1 4 4v4h-8zM0 10h8v8H0zM10 10h8v8h-8zM20 10h8v8h-8zM0 20h8v8H4a4 4 0 0 1-4-4zM10 20h8v8h-8zM20 20h8v4a4 4 0 0 1-4 4h-4z" />
        </svg>
      </div>
      <svg width="26" height="32" viewBox="0 0 26 32" className="ml-[29px]" fill="none" stroke="#fff" strokeWidth="2">
        <path d="M3 1h13l9 9v19a2 2 0 0 1-2 2H3a2 2 0 0 1-2-2V3a2 2 0 0 1 2-2zM16 1v9h9" />
        <rect x="6" y="16" width="14" height="11" rx="2" />
        <path d="M13 16v11M6 21h14" />
      </svg>
      <svg width="32" height="32" viewBox="0 0 32 32" className="ml-[44px]" fill="none" stroke="#fff" strokeWidth="2">
        <path d="M4 1v10h24V1M4 31V21h24v10" />
        <path d="M1 16h30" strokeDasharray="3 2" />
      </svg>
      <div className="ml-[34px] w-[16px] h-[2px] bg-white"></div>
      <div className="relative ml-[14px] w-[200px] h-[8px] rounded-full bg-[#6b6b6b]">
        <div className="absolute left-[84px] top-[-12px] w-[32px] h-[32px] rounded-full bg-[#8f8f8f]"></div>
      </div>
      <span className="ml-[14px] text-[28px] font-light text-white leading-none">+</span>
      <span className="ml-[30px] mr-[50px] text-[25px] font-light">100%</span>
    </div>
  );
}

export default function App() {
  return (
    <div className="w-[2880px] h-[1800px] overflow-hidden flex flex-col bg-[#292929] font-[Inter,sans-serif]">
      <TitleBar />
      <TabBar />
      <Ribbon />
      <FormulaBar />
      <div className="h-[5px] shrink-0 bg-[#c8c8c8]"></div>
      <Sheet />
      <SheetTabs />
      <StatusBar />
    </div>
  );
}
